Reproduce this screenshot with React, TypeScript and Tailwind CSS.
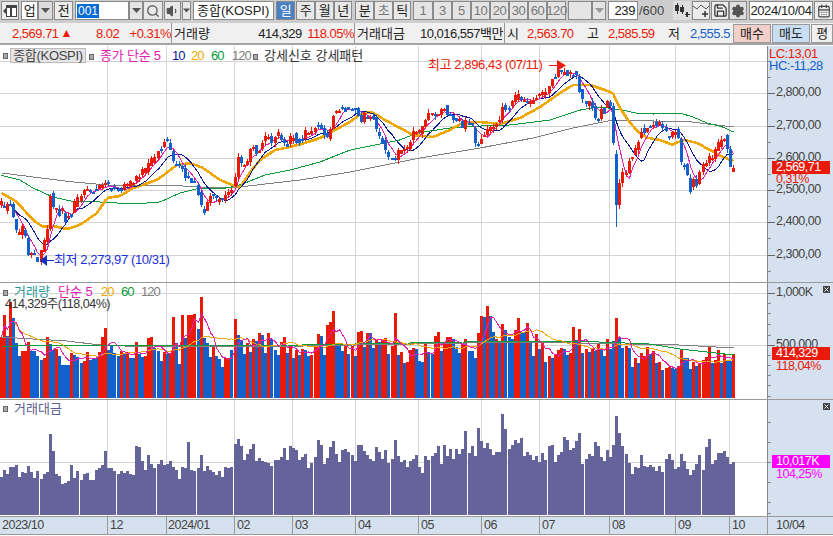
import type { ReactNode } from "react";
import { Search, Save, Settings, CalendarDays, Volume1, X } from "lucide-react";

const RED = "#ea1a08";
const BLUE = "#1360cb";
const MAGENTA = "#e020b0";
const NAVY = "#0a1a96";
const ORANGE = "#f0a800";
const GREEN = "#0a9a3a";
const GRAY = "#808080";

type Pt = [number, number];

const priceKeys: Pt[] = [
  [1, 203], [4, 210], [7, 203], [10, 205], [13, 215], [16, 232], [19, 233], [23, 228], [25, 233], [28, 253], [32, 255], [34, 257], [37, 262], [41, 255], [44, 243], [47, 235], [51, 189], [53, 210], [56, 205], [59, 214], [62, 210], [65, 222], [68, 212], [71, 216], [74, 205],
  [77, 200], [82, 195], [87, 189], [93, 192], [100, 187], [105, 183], [110, 188], [115, 190], [121, 193], [125, 185], [133, 183], [138, 175], [145, 170], [150, 162], [155, 155], [160, 150], [167, 138], [170, 150], [173, 163], [182, 167], [185, 175], [192, 182], [197, 188], [202, 210], [205, 210], [210, 195], [217, 200], [222, 202], [227, 190], [230, 192], [235, 178], [238, 153],
  [242, 165], [245, 165], [248, 158], [253, 143], [256, 153], [259, 150], [262, 145], [265, 137], [268, 137], [272, 142], [275, 138], [278, 133], [282, 142], [284, 145], [287, 145], [293, 135], [296, 140], [302, 142], [305, 132], [312, 133], [315, 128], [318, 122], [321, 130], [324, 132], [327, 138], [330, 130], [333, 113], [338, 110], [343, 108], [348, 110], [352, 110], [356, 107], [358, 113], [361, 120], [365, 115], [368, 120], [373, 118], [377, 133], [382, 140], [386, 152], [388, 160], [392, 157], [396, 162], [399, 150], [402, 150], [407, 147],
  [411, 142], [413, 133], [417, 130], [420, 132], [423, 123], [428, 115], [432, 113], [438, 116], [444, 105], [447, 115], [453, 117], [460, 120], [463, 128], [466, 122], [473, 125], [476, 147], [478, 145], [482, 135], [487, 130], [493, 125], [499, 121], [502, 105], [508, 110], [512, 103], [518, 93], [524, 103], [531, 102], [537, 95], [543, 95], [549, 88], [552, 80], [557, 73], [562, 73], [568, 73], [573, 73], [577, 77], [579, 90], [582, 98], [587, 105], [590, 100], [593, 108], [596, 122], [599, 117], [601, 107], [604, 112], [607, 105], [610, 98],
  [613, 133], [616, 208], [619, 184], [622, 170], [626, 178], [629, 160], [632, 155], [635, 152], [638, 143], [642, 127], [644, 131], [647, 128], [650, 127], [653, 123], [656, 127], [659, 123], [663, 128], [666, 132], [669, 139], [673, 133], [676, 130], [678, 134], [681, 163], [684, 163], [687, 172], [690, 192], [693, 178], [696, 187], [699, 172], [703, 167], [706, 162], [709, 158], [712, 160], [715, 152], [718, 145], [721, 142], [724, 135], [727, 148], [730, 170], [733, 169],
];

const ma20Keys: Pt[] = [
  [0, 192], [17, 202], [33, 220], [43, 227], [53, 226], [67, 229], [80, 225], [97, 213], [107, 198], [120, 196], [133, 188], [157, 180], [177, 165], [190, 163], [203, 168], [220, 180], [240, 188], [248, 175], [260, 160], [275, 150], [290, 147], [305, 143], [320, 138], [335, 130], [350, 122], [362, 113], [372, 112], [385, 120], [400, 128], [413, 135], [433, 137], [450, 130], [462, 123], [480, 122], [500, 124], [520, 118], [540, 107], [560, 93], [573, 85], [590, 85], [605, 90], [613, 93], [618, 105], [628, 120], [638, 132], [648, 138], [660, 140], [673, 145], [678, 142], [685, 140], [697, 143], [710, 150], [723, 157], [733, 161],
];

const ma60Keys: Pt[] = [
  [0, 175], [20, 180], [33, 188], [53, 197], [70, 201], [100, 202], [133, 204], [160, 202], [180, 193], [200, 188], [227, 188], [240, 185], [265, 175], [290, 170], [320, 162], [350, 150], [375, 145], [400, 140], [417, 133], [450, 128], [480, 126], [510, 125], [550, 120], [580, 110], [600, 107], [623, 110], [635, 113], [653, 114], [680, 113], [693, 117], [707, 123], [723, 127], [733, 132],
];

const ma120Keys: Pt[] = [
  [2, 173], [33, 177], [73, 182], [107, 185], [167, 185], [213, 188], [240, 187], [300, 180], [350, 172], [420, 158], [480, 148], [533, 138], [573, 128], [613, 120], [653, 121], [683, 121], [700, 123], [733, 127],
];

// volume tops, zoomed pixel rows, sign = colour (plus red, minus blue)
const vol1 = [200, 135, -198, 96, -144, -219, -258, 243, 243, 216, -243, -243, -258, -270, 264, 201, -222, -240, 237, -258, -285, -285, -285, 249, -255, -261, -279, 273, 246, -269, -268, -264, 246, 201, 174, -240, -225, -249, -258, 243, -252, 246, -264, -264, 216, -252, -261, 258, 204, 201, -234, -243, -273, 246, -252, 249, 141, -219, -282, 135, -204, 135, 135, 132, -177, 81, -204, -219, -261, 231, -258, -267, -291, 264, 264, -240, 147, -195, -210, -252, 219, -246, 207, -213, 189, -195, -249, 189, -207, -240, -255, 216, 201, -249, 228, -264, 240, -255];
const vol2 = [201, -204, -222, 219, 189, 156, -162, -219, 129, 120, 87, -189, -189, -207, 189, -216, 192, -222, 150, 147, -195, 153, -153, -198, 174, -180, 171, 168, -216, 192, 93, -219, 210, -243, 240, 204, 198, -201, -237, -240, 180, -210, -216, 162, 150, -207, 180, 165, 165, -171, -195, -213, 186, 171, -207, -207, -228, 153, 102, -105, 72, -102, -150, 171, -180, 126, -144, -165, -171, 144, 108];
const vol3 = [-150, -150, 123, -180, -222, 156, -201, 180, -240, 222, -228, 216, 204, 198, -201, -219, 213, 135, -174, 141, -213, 201, -210, 201, -207, 186, -204, -222, 171, -201, -177, 108, -168, -198, 192, -198, -255, 228, -243, 213, 222, 195, -216, 207, -243, 240, -264, 258, 255, -258, -261, 252, 204, -228, -228, -261, 240, -252, 243, 234, 225, 192, -243, 234, 204, -243, 216, -237, -237, 216];

const amt1 = [230, 210, 222, 201, 201, 195, 231, 216, 219, 198, 216, 234, 213, 237, 222, 216, 102, 153, 222, 228, 252, 250, 243, 195, 234, 213, 240, 222, 219, 240, 240, 210, 204, 195, 153, 204, 204, 213, 222, 213, 219, 213, 222, 225, 138, 141, 183, 210, 165, 192, 204, 192, 180, 195, 192, 183, 201, 210, 237, 201, 204, 126, 210, 213, 204, 165, 213, 198, 210, 216, 225, 213, 231, 201, 204, 201, 132, 117, 138, 180, 162, 147, 132, 183, 174, 183, 186, 189, 198, 180, 180, 171, 144, 180, 138, 144, 150, 180];
const amt2 = [525, 516, 558, 543, 525, 474, 489, 546, 528, 495, 477, 516, 540, 504, 501, 510, 519, 537, 489, 489, 507, 519, 531, 537, 495, 510, 531, 504, 543, 531, 474, 522, 540, 534, 555, 537, 531, 519, 555, 573, 522, 534, 522, 513, 492, 546, 489, 522, 501, 531, 501, 516, 501, 447, 513, 492, 522, 438, 477, 498, 483, 501, 519, 510, 510, 396, 441, 501, 489, 474, 483];
const amt3 = [468, 522, 510, 519, 534, 522, 540, 513, 534, 492, 489, 540, 519, 510, 465, 474, 504, 498, 477, 453, 546, 531, 516, 522, 480, 492, 525, 537, 504, 525, 489, 402, 453, 492, 516, 543, 576, 555, 558, 519, 552, 555, 549, 555, 567, 552, 570, 531, 516, 534, 561, 555, 516, 537, 561, 579, 564, 546, 519, 564, 495, 471, 546, 534, 513, 513, 507, 525, 546, 540];

const volume = [
  ...vol1.map((v) => ({ top: 270 + Math.abs(v) / 3, up: v > 0 })),
  ...[...vol2, ...vol3].map((v) => ({ top: 282 + Math.abs(v) / 3, up: v > 0 })),
];
const amount = [...amt1.map((v) => 400 + v / 3), ...[...amt2, ...amt3].map((v) => 282 + v / 3)];

const barX = (i: number) => Math.floor(i * 3.079);
const COUNT = 239;
const xs = Array.from({ length: COUNT }, (_, i) => barX(i) + 1.5);

function interp(keys: Pt[], x: number) {
  if (x <= keys[0][0]) return keys[0][1];
  for (let k = 1; k < keys.length; k++) {
    if (x <= keys[k][0]) {
      const [x0, y0] = keys[k - 1];
      const [x1, y1] = keys[k];
      return y0 + ((y1 - y0) * (x - x0)) / (x1 - x0);
    }
  }
  return keys[keys.length - 1][1];
}

let seed = 17;
const rnd = () => {
  seed = (seed * 16807) % 2147483647;
  return seed / 2147483647;
};

const closes = xs.map((x) => interp(priceKeys, x));
const candles = closes.map((base, i) => {
  const bigDrop = i === 200;
  const close = base + (rnd() - 0.5) * 6;
  const open = bigDrop ? 154 : (i === 0 ? base + 2 : closes[i - 1]) + (rnd() - 0.5) * 6;
  const up = close < open;
  const top = Math.min(open, close);
  const bottom = Math.max(open, close);
  return {
    x: barX(i),
    up,
    top,
    h: Math.max(2, bottom - top),
    hi: top - rnd() * 4,
    lo: bigDrop ? 227 : bottom + rnd() * 4,
  };
});

function movingAvg(values: number[], n: number) {
  return values.map((_, i) => {
    const part = values.slice(Math.max(0, i - n + 1), i + 1);
    return part.reduce((a, b) => a + b, 0) / part.length;
  });
}

const toPoints = (ys: number[]) => ys.map((y, i) => `${xs[i]},${y.toFixed(1)}`).join(" ");
const keyLine = (keys: Pt[]) => toPoints(xs.map((x) => interp(keys, x)));

const vLines = [107, 166, 234, 292, 355, 418, 481, 539, 609, 675, 729];
const priceLines = [61, 93, 126, 158, 190, 222, 255];

const volTops = volume.map((v) => v.top);
const volMa60: Pt[] = [[0, 346], [300, 345], [520, 341], [600, 342], [650, 344], [680, 349], [733, 355]];
const volMa120: Pt[] = [[0, 337], [67, 341], [100, 345], [150, 347], [300, 346], [520, 342], [620, 344], [680, 345], [733, 348]];

function Grid({ rows, top, height }: { rows: number[]; top: number; height: number }) {
  return (
    <g stroke="#d4d4d4" strokeWidth={1} shapeRendering="crispEdges">
      {rows.map((y) => (
        <line key={y} x1={0} x2={767} y1={y + 0.5} y2={y + 0.5} />
      ))}
      {vLines.map((x) => (
        <line key={x} x1={x + 0.5} x2={x + 0.5} y1={top} y2={top + height} />
      ))}
    </g>
  );
}

function Line({ points, color, width = 1 }: { points: string; color: string; width?: number }) {
  return <polyline points={points} fill="none" stroke={color} strokeWidth={width} shapeRendering="crispEdges" />;
}

function PriceChart() {
  return (
    <svg width={767} height={236} viewBox="0 46 767 236" className="block">
      <Grid rows={priceLines} top={46} height={236} />
      <Line points={keyLine(ma120Keys)} color={GRAY} />
      <Line points={keyLine(ma60Keys)} color={GREEN} />
      <Line points={keyLine(ma20Keys)} color={ORANGE} width={2.6} />
      <Line points={toPoints(movingAvg(closes, 10))} color={NAVY} />
      <Line points={toPoints(movingAvg(closes, 5))} color={MAGENTA} />
      <g shapeRendering="crispEdges">
        {candles.map((c, i) => (
          <g key={i} fill={c.up ? RED : BLUE}>
            <rect x={c.x + 1} y={c.hi} width={1} height={c.lo - c.hi} />
            <rect x={c.x} y={c.top} width={3} height={c.h} />
          </g>
        ))}
      </g>
      <path d="M549 65.5h10" stroke={RED} strokeWidth={1} shapeRendering="crispEdges" />
      <path d="M557 60l9 5.500-9 5.500z" fill={RED} />
      <path d="M45 260.500h9" stroke="#1030c0" strokeWidth={1} shapeRendering="crispEdges" />
      <path d="M40 260.500l7-5.500v11z" fill="#1030c0" />
    </svg>
  );
}

function VolumeChart() {
  return (
    <svg width={767} height={116} viewBox="0 283 767 116" className="block">
      <Grid rows={[293, 345]} top={283} height={116} />
      <g shapeRendering="crispEdges">
        {volume.map((v, i) => (
          <rect key={i} x={barX(i)} y={v.top} width={3} height={398 - v.top} fill={v.up ? RED : BLUE} />
        ))}
      </g>
      <Line points={keyLine(volMa120)} color={GRAY} />
      <Line points={keyLine(volMa60)} color={GREEN} />
      <Line points={toPoints(movingAvg(volTops, 20))} color={ORANGE} />
      <Line points={toPoints(movingAvg(volTops, 5))} color={MAGENTA} />
    </svg>
  );
}

function AmountChart() {
  return (
    <svg width={767} height={116} viewBox="0 400 767 116" className="block">
      <Grid rows={[462]} top={400} height={116} />
      <g shapeRendering="crispEdges" fill="#65649a">
        {amount.map((top, i) => (
          <rect key={i} x={barX(i)} y={top} width={3} height={515 - top} />
        ))}
      </g>
    </svg>
  );
}

function Tool({ className, children }: { className: string; children?: ReactNode }) {
  return (
    <div className={`h-[19px] shrink-0 flex items-center justify-center border border-[#8a8a8a] text-[13px] leading-none text-[#222] tracking-[-0.4px] ${className}`}>
      {children}
    </div>
  );
}

function Caret({ color = "#555" }: { color?: string }) {
  return (
    <svg width={9} height={5} viewBox="0 0 9 5">
      <path d="M0 0h9L4.500 5z" fill={color} />
    </svg>
  );
}

function Toolbar() {
  return (
    <div className="h-[23px] flex items-start pt-[1px] bg-[#cdcdcd]">
      <Tool className="ml-[1px] w-[18px] bg-[#ececec]">
        <svg width={14} height={14} viewBox="0 0 14 14">
          <path d="M0 7l3-3v6z" fill="#444" />
          <rect x={3.500} y={1.500} width={10} height={11} fill="#fff" stroke="#444" />
          <rect x={3} y={1} width={11} height={3} fill="#444" />
          <rect x={7} y={4} width={2} height={9} fill="#444" />
        </svg>
      </Tool>
      <Tool className="ml-[2px] w-[17px] bg-white">업</Tool>
      <Tool className="w-[15px] bg-[#dcdcdc]"><Caret /></Tool>
      <Tool className="ml-[1px] w-[19px] bg-[#ececec]">전</Tool>
      <div className="ml-[2px] w-[54px] h-[19px] shrink-0 flex items-center bg-white border border-[#8a8a8a] pl-[1px] text-[12px] leading-none">
        <span className="bg-[#0a6cd6] text-white px-[1px] h-[14px] flex items-center">001</span>
      </div>
      <Tool className="w-[14px] bg-[#e4e4e4]"><Caret /></Tool>
      <Tool className="w-[20px] bg-[#e8e8e8]"><Search size={14} color="#666" strokeWidth={2.4} /></Tool>
      <Tool className="ml-[1px] w-[17px] bg-[#e8e8e8]"><Volume1 size={14} color="#555" fill="#555" /></Tool>
      <Tool className="ml-[1px] w-[9px] bg-[#e8e8e8]"><Caret /></Tool>
      <Tool className="ml-[2px] w-[81px] bg-white justify-start! pl-[3px] tracking-normal!">종합(KOSPI)</Tool>
      <Tool className="ml-[2px] w-[19px] bg-[#4a80c4] text-white!">일</Tool>
      <Tool className="ml-[1px] w-[19px] bg-[#e8e8e8]">주</Tool>
      <Tool className="w-[19px] bg-[#e8e8e8]">월</Tool>
      <Tool className="w-[18px] bg-[#e8e8e8]">년</Tool>
      <Tool className="ml-[3px] w-[19px] bg-[#e8e8e8]">분</Tool>
      <Tool className="w-[19px] bg-[#e8e8e8] text-[#777]!">초</Tool>
      <Tool className="w-[18px] bg-[#e8e8e8]">틱</Tool>
      <Tool className="ml-[2px] w-[20px] bg-[#e4e4e4] text-[#777]!">1</Tool>
      <Tool className="w-[19px] bg-[#e4e4e4] text-[#777]!">3</Tool>
      <Tool className="w-[19px] bg-[#e4e4e4] text-[#777]!">5</Tool>
      <Tool className="w-[19px] bg-[#e4e4e4] text-[#777]!">10</Tool>
      <Tool className="w-[19px] bg-[#e4e4e4] text-[#777]!">20</Tool>
      <Tool className="w-[19px] bg-[#e4e4e4] text-[#777]!">30</Tool>
      <Tool className="w-[19px] bg-[#e4e4e4] text-[#777]!">60</Tool>
      <Tool className="w-[19px] bg-[#e4e4e4] text-[#777]!">120</Tool>
      <Tool className="ml-[2px] w-[24px] bg-[#e4e4e4]" />
      <Tool className="w-[14px] bg-[#e4e4e4]"><Caret color="#999" /></Tool>
      <Tool className="ml-[2px] w-[30px] bg-white justify-end! pr-[2px]">239</Tool>
      <span className="ml-[1px] w-[35px] h-[19px] flex items-center text-[13px] leading-none text-[#444]">/600</span>
      <Tool className="w-[18px] bg-[#dedede] border-transparent!">
        <svg width={16} height={15} viewBox="0 0 16 15" shapeRendering="crispEdges">
          <path d="M3 0v11M8 2v9" stroke="#333" />
          <path d="M1 2h4v6H1zM6 4h4v5H6z" fill="#333" />
          <path d="M13 9v5M10.500 11.500h5" stroke="#333" strokeWidth={1.500} />
        </svg>
      </Tool>
      <Tool className="ml-[1px] w-[18px] bg-[#ececec]">
        <svg width={16} height={15} viewBox="0 0 16 15">
          <path d="M0 3l4 3 4-4 5 4 3-3" fill="none" stroke="#555" />
          <path d="M12 8v6M9 11h6" stroke="#333" strokeWidth={1.500} />
        </svg>
      </Tool>
      <Tool className="ml-[1px] w-[18px] bg-[#ececec]"><Save size={15} color="#333" /></Tool>
      <Tool className="w-[18px] bg-[#dedede]"><Settings size={14} color="#555" fill="#555" /></Tool>
      <Tool className="ml-[2px] w-[64px] bg-white">2024/10/04</Tool>
      <Tool className="ml-[1px] w-[19px] bg-[#ececec]"><CalendarDays size={14} color="#444" /></Tool>
    </div>
  );
}

function QuoteRow() {
  return (
    <div className="h-[20px] flex items-center bg-[#f0f0f0] text-[13px] leading-none whitespace-nowrap tracking-[-0.5px]">
      <div className="w-[172px] h-full flex items-center border-r border-[#999] text-[#ea1a08]">
        <span className="ml-[12px] w-[48px]">2,569.71</span>
        <span className="ml-[2px] text-[12px]">▲</span>
        <span className="ml-[24px] w-[36px]">8.02</span>
        <span>+0.31%</span>
      </div>
      <div className="w-[183px] h-full flex items-center border-r border-[#999] text-[#ea1a08]">
        <span className="ml-[2px] w-[86px] text-[#222] tracking-normal">거래량</span>
        <span className="w-[50px] text-[#222]">414,329</span>
        <span>118.05%</span>
      </div>
      <div className="w-[150px] h-full flex items-center border-r border-[#999] text-[#222]">
        <span className="ml-[2px] w-[63px] tracking-normal">거래대금</span>
        <span>10,016,557백만</span>
      </div>
      <div className="w-[228px] h-full flex items-center text-[#222]">
        <span className="ml-[2px] w-[20px]">시</span>
        <span className="w-[60px] text-[#ea1a08]">2,563.70</span>
        <span className="w-[21px]">고</span>
        <span className="w-[60px] text-[#ea1a08]">2,585.59</span>
        <span className="w-[22px]">저</span>
        <span className="text-[#1360cb]">2,555.5</span>
      </div>
      <div className="w-[38px] h-[19px] flex items-center justify-center bg-[#f2cfc8] border border-[#999] text-[#222] tracking-normal">매수</div>
      <div className="ml-[1px] w-[38px] h-[19px] flex items-center justify-center bg-[#c8def2] border border-[#999] text-[#222] tracking-normal">매도</div>
      <div className="ml-[1px] flex-1 h-[19px] flex items-center justify-center bg-[#f0f0f0] border border-[#999] text-[#222]">평</div>
    </div>
  );
}

function Ticks({ height, major, minor }: { height: number; major: number[]; minor: number[] }) {
  return (
    <svg width={10} height={height} className="absolute left-0 top-0" shapeRendering="crispEdges">
      {minor.map((y) => (
        <line key={y} x1={0} x2={3} y1={y + 0.5} y2={y + 0.5} stroke="#888" />
      ))}
      {major.map((y) => (
        <line key={y} x1={0} x2={7} y1={y + 0.5} y2={y + 0.5} stroke="#666" />
      ))}
    </svg>
  );
}

function CloseBox({ className }: { className: string }) {
  return (
    <div className={`absolute right-[3px] w-[7px] h-[7px] bg-[#444] flex items-center justify-center ${className}`}>
      <X size={7} color="#fff" strokeWidth={3} />
    </div>
  );
}

const legendSquare = <span className="inline-block w-[5px] h-[6px] bg-[#aaa] border border-[#666]" />;

export default function App() {
  return (
    <div className="w-[833px] h-[536px] overflow-hidden bg-white flex flex-col [font-family:'Liberation_Sans','Noto_Sans_CJK_KR',sans-serif]">
      <Toolbar />
      <QuoteRow />
      <div className="h-[3px] border-t-2 border-[#a4a4a4] bg-white" />

      {/* 가격 */}
      <div className="h-[237px] flex border-b border-[#999]">
        <div className="relative w-[767px]">
          <PriceChart />
          <div className="absolute left-[3px] top-[2px] flex items-center text-[13px] leading-none whitespace-nowrap">
            {legendSquare}
            <span className="ml-[2px] w-[76px] h-[15px] flex items-center justify-center bg-[#e4e4e4] border border-[#bbb] text-[#444] tracking-[-0.3px]">종합(KOSPI)</span>
            <span className="ml-[3px] w-[11px]">{legendSquare}</span>
            <span className="w-[72px] text-[#e020b0] tracking-[-0.2px]">종가 단순 5</span>
            <span className="w-[19px] text-[#0a1a96] tracking-[-1px]">10</span>
            <span className="w-[20px] text-[#f0a800] tracking-[-1px]">20</span>
            <span className="w-[21px] text-[#0a9a3a] tracking-[-1px]">60</span>
            <span className="w-[21px] text-[#808080] tracking-[-1px]">120</span>
            <span className="w-[11px]">{legendSquare}</span>
            <span className="text-[#333]">강세신호 강세패턴</span>
          </div>
          <span className="absolute left-[428px] top-[12px] text-[13px] leading-none whitespace-nowrap tracking-[-0.4px] text-[#ea1a08]">최고 2,896,43 (07/11)</span>
          <span className="absolute left-[54px] top-[207px] text-[13px] leading-none whitespace-nowrap tracking-[-0.4px] text-[#1a2fd8]">최저 2,273,97 (10/31)</span>
        </div>
        <div className="relative flex-1 bg-[#d6e1ef] border-l border-[#888] text-[12.5px] leading-none text-[#444] whitespace-nowrap tracking-[-0.5px]">
          <Ticks height={236} major={[47, 80, 112, 144, 176, 209]} minor={[15, 31, 63, 96, 128, 160, 192, 225]} />
          <span className="absolute left-[1px] top-[1px] text-[13px] text-[#ea1a08]">LC:13,01</span>
          <span className="absolute left-[1px] top-[13px] text-[13px] text-[#1360cb]">HC:-11,28</span>
          <span className="absolute left-[8px] top-[40px]">2,800,00</span>
          <span className="absolute left-[8px] top-[73px]">2,700,00</span>
          <span className="absolute left-[8px] top-[105px]">2,600,00</span>
          <span className="absolute left-[8px] top-[137px]">2,500,00</span>
          <span className="absolute left-[8px] top-[169px]">2,400,00</span>
          <span className="absolute left-[8px] top-[202px]">2,300,00</span>
          <div className="absolute left-[4px] top-[115px] w-[58px] h-[13px] bg-[#ea1a08] text-white flex items-center pl-[4px]">2,569,71</div>
          <span className="absolute left-[8px] top-[127px] text-[#ea1a08]">0,31%</span>
        </div>
      </div>

      {/* 거래량 */}
      <div className="h-[117px] flex border-b border-[#999]">
        <div className="relative w-[767px]">
          <VolumeChart />
          <div className="absolute left-[3px] top-[2px] flex items-center text-[13px] leading-none whitespace-nowrap">
            <span className="w-[11px]">{legendSquare}</span>
            <span className="w-[44px] text-[#2a9a9a]">거래량</span>
            <span className="w-[43px] text-[#e020b0]">단순 5</span>
            <span className="w-[20px] text-[#f0a800] tracking-[-1px]">20</span>
            <span className="w-[20px] text-[#0a9a3a] tracking-[-1px]">60</span>
            <span className="text-[#808080] tracking-[-1px]">120</span>
          </div>
          <span className="absolute left-[5px] top-[15px] text-[12.5px] leading-none whitespace-nowrap tracking-[-0.5px] text-[#333]">414,329주(118,04%)</span>
        </div>
        <div className="relative flex-1 bg-[#d6e1ef] border-l border-[#888] text-[12.5px] leading-none text-[#444] whitespace-nowrap tracking-[-0.5px]">
          <Ticks height={116} major={[10, 62]} minor={[20, 30, 41, 52, 72, 82, 92, 102, 113]} />
          <CloseBox className="top-[3px]" />
          <span className="absolute left-[8px] top-[3px]">1,000K</span>
          <span className="absolute left-[8px] top-[55px]">500,000</span>
          <div className="absolute left-[4px] top-[64px] w-[58px] h-[13px] bg-[#ea1a08] text-white flex items-center pl-[4px]">414,329</div>
          <span className="absolute left-[8px] top-[77px] text-[#ea1a08]">118,04%</span>
        </div>
      </div>

      {/* 거래대금 */}
      <div className="h-[117px] flex border-b border-[#999]">
        <div className="relative w-[767px]">
          <AmountChart />
          <div className="absolute left-[3px] top-[2px] flex items-center text-[13px] leading-none whitespace-nowrap">
            {legendSquare}
            <span className="ml-[6px] text-[#5c5c90]">거래대금</span>
          </div>
        </div>
        <div className="relative flex-1 bg-[#d6e1ef] border-l border-[#888] text-[12.5px] leading-none whitespace-nowrap tracking-[-0.5px]">
          <Ticks height={116} major={[]} minor={[22, 42, 62, 82, 102, 113]} />
          <CloseBox className="top-[3px]" />
          <div className="absolute left-[4px] top-[55px] w-[58px] h-[13px] bg-[#ff00ff] text-white flex items-center pl-[4px]">10,017K</div>
          <span className="absolute left-[8px] top-[68px] text-[#ff00ff]">104,25%</span>
        </div>
      </div>

      {/* 날짜 */}
      <div className="h-[18px] flex bg-[#d6e1ef] border-b border-[#999] text-[12.5px] leading-none text-[#444] tracking-[-0.5px]">
        <div className="w-[107px] flex items-center pl-[2px]">2023/10</div>
        <div className="w-[59px] flex items-center pl-[2px] border-l border-[#999]">12</div>
        <div className="w-[68px] flex items-center pl-[1px] border-l border-[#999]">2024/01</div>
        <div className="w-[58px] flex items-center pl-[2px] border-l border-[#999]">02</div>
        <div className="w-[63px] flex items-center pl-[2px] border-l border-[#999]">03</div>
        <div className="w-[63px] flex items-center pl-[2px] border-l border-[#999]">04</div>
        <div className="w-[63px] flex items-center pl-[2px] border-l border-[#999]">05</div>
        <div className="w-[58px] flex items-center pl-[2px] border-l border-[#999]">06</div>
        <div className="w-[70px] flex items-center pl-[2px] border-l border-[#999]">07</div>
        <div className="w-[66px] flex items-center pl-[2px] border-l border-[#999]">08</div>
        <div className="w-[54px] flex items-center pl-[2px] border-l border-[#999]">09</div>
        <div className="w-[38px] flex items-center pl-[2px] border-l border-[#999]">10</div>
        <div className="flex-1 flex items-center pl-[8px] border-l border-[#999]">10/04</div>
      </div>
    </div>
  );
}
